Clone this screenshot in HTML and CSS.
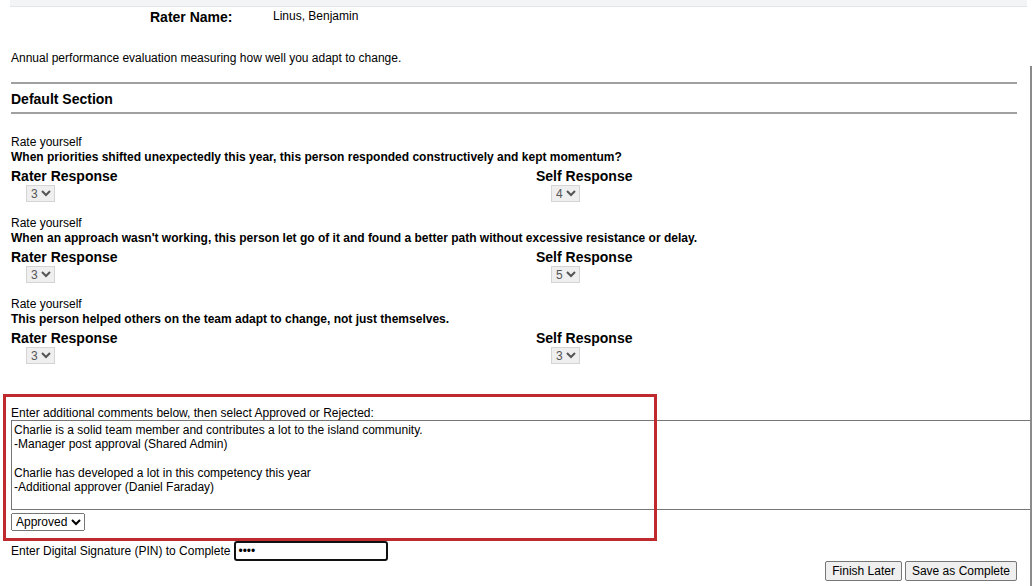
FILE: index.html
```html
<html>
    <head>
        <meta charset="UTF-8">
        <link rel="stylesheet" href="styles.css">
    </head>
    <body>
        <div class="barraSuperior"></div>
        <div class="evaluador">
            <span class="etiqueta">Rater Name:</span>
            <span class="nombre">Linus, Benjamin</span>
        </div>

        <div class="contenido">
            <p class="descripcion">Annual performance evaluation measuring how well you adapt to change.</p>
            <hr class="linea">
            <h3 class="seccion">Default Section</h3>
            <hr class="linea">

            <div class="pregunta">
                <div class="instruccion">Rate yourself</div>
                <div class="texto">When priorities shifted unexpectedly this year, this person responded constructively and kept momentum?</div>
                <div class="respuestas">
                    <div class="respuesta">
                        <h4>Rater Response</h4>
                        <select disabled><option>3</option></select>
                    </div>
                    <div class="respuesta">
                        <h4>Self Response</h4>
                        <select disabled><option>4</option></select>
                    </div>
                </div>
            </div>

            <div class="pregunta">
                <div class="instruccion">Rate yourself</div>
                <div class="texto">When an approach wasn't working, this person let go of it and found a better path without excessive resistance or delay.</div>
                <div class="respuestas">
                    <div class="respuesta">
                        <h4>Rater Response</h4>
                        <select disabled><option>3</option></select>
                    </div>
                    <div class="respuesta">
                        <h4>Self Response</h4>
                        <select disabled><option>5</option></select>
                    </div>
                </div>
            </div>

            <div class="pregunta">
                <div class="instruccion">Rate yourself</div>
                <div class="texto">This person helped others on the team adapt to change, not just themselves.</div>
                <div class="respuestas">
                    <div class="respuesta">
                        <h4>Rater Response</h4>
                        <select disabled><option>3</option></select>
                    </div>
                    <div class="respuesta">
                        <h4>Self Response</h4>
                        <select disabled><option>3</option></select>
                    </div>
                </div>
            </div>

            <div class="comentarios">
                <div class="marco"></div>
                <label for="comentario">Enter additional comments below, then select Approved or Rejected:</label>
                <textarea id="comentario">Charlie is a solid team member and contributes a lot to the island community.
-Manager post approval (Shared Admin)

Charlie has developed a lot in this competency this year
-Additional approver (Daniel Faraday)</textarea>
                <select class="estado">
                    <option>Approved</option>
                    <option>Rejected</option>
                </select>
            </div>

            <div class="firma">
                <label for="pin">Enter Digital Signature (PIN) to Complete</label>
                <input type="password" id="pin" value="1234">
            </div>

            <div class="botones">
                <button>Finish Later</button>
                <button>Save as Complete</button>
            </div>
        </div>
        <div class="desplazador"></div>
    </body>
</html>
```

FILE: styles.css
```css
html, body {
    overflow: hidden;
}
body {
    margin: 0;
    font-family: "Liberation Sans", Arial, sans-serif;
    font-size: 12px;
    color: #000;
    background: #fff;
}
.barraSuperior {
    height: 6px;
    margin: 0 6px 0 10px;
    background: #f3f4f6;
    border-bottom: 1px solid #e3e4e6;
}
.evaluador {
    display: flex;
    align-items: flex-start;
    padding: 2px 0 0 150px;
    height: 26px;
}
.etiqueta {
    width: 123px;
    font-size: 14px;
    font-weight: bold;
}
.nombre {
    font-size: 12px;
}
.contenido {
    padding: 0 16px 0 11px;
}
.descripcion {
    margin: 16px 0 17px;
}
.linea {
    margin: 0;
    border: 0;
    border-top: 2px solid #a0a0a0;
}
.seccion {
    margin: 0;
    padding: 7px 0 5px;
    font-size: 14px;
}
.pregunta {
    height: 81px;
}
.pregunta:first-of-type {
    margin-top: 21px;
}
.instruccion, .texto {
    line-height: 15px;
}
.texto {
    font-weight: bold;
}
.respuestas {
    display: grid;
    grid-template-columns: 525px auto;
    margin-top: 3px;
}
.respuesta h4 {
    margin: 0;
    font-size: 14px;
    line-height: 17px;
}
.respuesta select {
    margin: 0 0 0 15px;
    height: 17px;
    font-family: inherit;
    font-size: 12px;
    padding: 0;
    color: #555;
    border-color: #d4d4d4;
    opacity: 1;
}
.comentarios {
    position: relative;
    margin-top: 29px;
}
.marco {
    position: absolute;
    left: -8px;
    top: -13px;
    width: 648px;
    height: 141px;
    border: 3px solid #bf2a2e;
    pointer-events: none;
}
.comentarios label {
    display: block;
    line-height: 13px;
}
textarea {
    display: block;
    box-sizing: border-box;
    width: 1019px;
    height: 90px;
    margin: 0;
    padding: 2px 2px;
    border: 1px solid #767676;
    border-right: 0;
    resize: none;
    font-family: inherit;
    font-size: 12px;
    line-height: 14.3px;
}
.estado {
    margin-top: 3px;
    height: 18px;
    font-family: inherit;
    font-size: 12px;
    padding: 0;
}
.firma {
    display: flex;
    align-items: center;
    margin-top: 10px;
}
.firma label {
    margin-right: 4px;
}
.firma input {
    box-sizing: border-box;
    width: 154px;
    height: 20px;
    border: 2px solid #111;
    border-radius: 3px;
    outline: none;
    font-size: 12px;
    padding: 1px 2px;
}
.botones {
    display: flex;
    justify-content: flex-end;
    gap: 3px;
    margin-top: 0;
}
.botones button {
    height: 20px;
    padding: 1px 6px;
    font-family: inherit;
    font-size: 12px;
    background: #efefef;
    border: 1px solid #767676;
    border-radius: 2px;
}
.desplazador {
    position: fixed;
    right: 1px;
    top: 66px;
    bottom: 0;
    width: 2px;
    background: #8a8a8a;
}
```
